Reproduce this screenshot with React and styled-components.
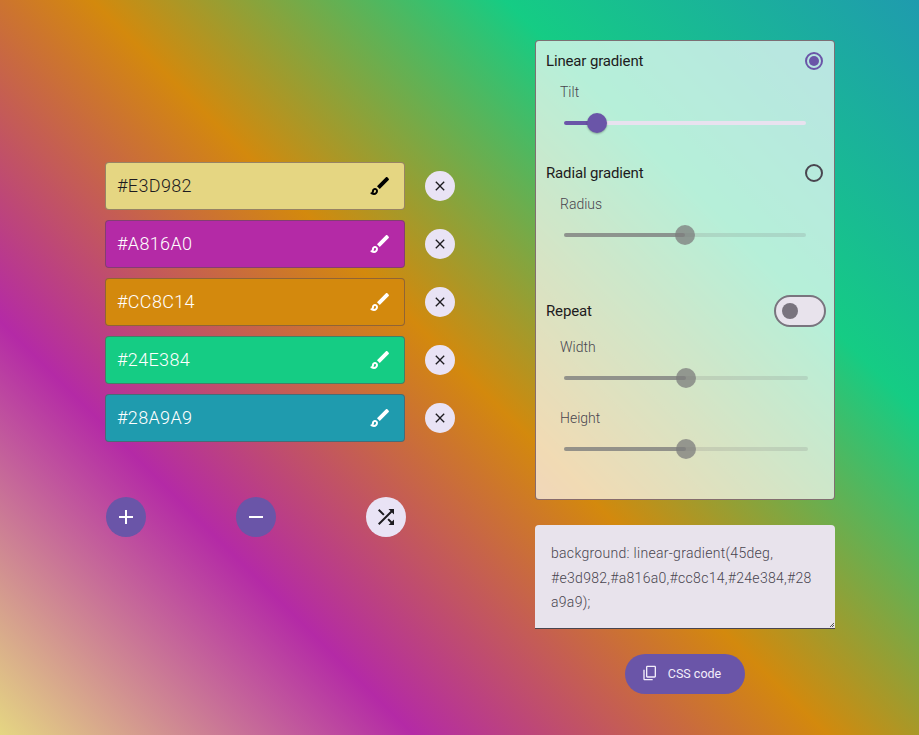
import React from "react";
import styled, { createGlobalStyle } from "styled-components";

const colors = [
  { hex: "#E3D982", swatch: "#e5d682", ink: "#1d1b20", icon: "#000" },
  { hex: "#A816A0", swatch: "#b42aa6", ink: "#fff", icon: "#fff" },
  { hex: "#CC8C14", swatch: "#d3890d", ink: "#fff", icon: "#fff" },
  { hex: "#24E384", swatch: "#15cc84", ink: "#fff", icon: "#fff" },
  { hex: "#28A9A9", swatch: "#1f9bae", ink: "#fff", icon: "#fff" },
];

const cssText =
  "background: linear-gradient(45deg, #e3d982,#a816a0,#cc8c14,#24e384,#28a9a9);";

const Global = createGlobalStyle`
  html, body { margin: 0; padding: 0; height: 100%; }
  body {
    font-family: Roboto, "Liberation Sans", sans-serif;
    overflow: hidden;
  }
`;

const Page = styled.main`
  width: 919px;
  height: 735px;
  display: flex;
  align-items: flex-start;
  gap: 80px;
  padding: 40px 0 0 105px;
  box-sizing: border-box;
  background: linear-gradient(45deg, #e5d682, #b42aa6, #d3890d, #15cc84, #1f9bae);
`;

const LeftColumn = styled.section`
  width: 350px;
  padding-top: 122px;
`;

const ColorList = styled.div`
  display: flex;
  flex-direction: column;
  gap: 10px;
`;

const ColorRow = styled.div`
  display: flex;
  align-items: center;
  gap: 20px;
`;

const ColorField = styled.div`
  width: 300px;
  height: 48px;
  box-sizing: border-box;
  display: flex;
  align-items: center;
  padding: 0 12px 0 11px;
  border: 1px solid rgba(100, 75, 80, 0.6);
  border-radius: 4px;
  background: ${(p) => p.$bg};
`;

const ColorInput = styled.input`
  flex: 1;
  min-width: 0;
  border: 0;
  padding: 0 0 2px;
  outline: none;
  background: transparent;
  font-family: Roboto, sans-serif;
  font-weight: 300;
  font-size: 18px;
  letter-spacing: 0.35px;
  color: ${(p) => p.$ink};
`;

const RoundButton = styled.button`
  width: ${(p) => p.$size}px;
  height: ${(p) => p.$size}px;
  flex: none;
  padding: 0;
  border: 0;
  border-radius: 50%;
  display: flex;
  align-items: center;
  justify-content: center;
  background: ${(p) => (p.$primary ? "#6a55a8" : "#e9e3f5")};
  color: ${(p) => (p.$primary ? "#fff" : "#1d1b20")};
`;

const Actions = styled.div`
  width: 300px;
  margin: 55px 0 0 1px;
  display: flex;
  justify-content: space-between;
`;

const RightColumn = styled.section`
  width: 300px;
  display: flex;
  flex-direction: column;
  align-items: center;
`;

const Panel = styled.div`
  width: 100%;
  height: 460px;
  box-sizing: border-box;
  border: 1px solid rgba(110, 80, 90, 0.8);
  border-radius: 4px;
  background: rgba(255, 255, 255, 0.69);
`;

const OptionRow = styled.div`
  height: ${(p) => p.$h || 40}px;
  margin-top: ${(p) => p.$mt || 0}px;
  padding: 0 ${(p) => p.$pr || 11}px 0 10px;
  display: flex;
  align-items: center;
  justify-content: space-between;
`;

const OptionTitle = styled.span`
  font-size: 15px;
  font-weight: 400;
  letter-spacing: -0.15px;
  color: #1d1b20;
`;

const Radio = styled.span`
  width: 18px;
  height: 18px;
  box-sizing: border-box;
  border-radius: 50%;
  border: 2px solid ${(p) => (p.$on ? "#6a55a8" : "#49454f")};
  display: flex;
  align-items: center;
  justify-content: center;
  &::after {
    content: "";
    width: 10px;
    height: 10px;
    border-radius: 50%;
    background: ${(p) => (p.$on ? "#6a55a8" : "transparent")};
  }
`;

const FieldLabel = styled.div`
  height: 22px;
  line-height: 22px;
  margin-top: ${(p) => p.$mt || 0}px;
  padding-left: 24px;
  font-size: 14px;
  font-weight: 300;
  color: #49454f;
`;

const SliderBox = styled.div`
  height: 40px;
  display: flex;
  align-items: center;
  padding-left: 28px;
`;

const Track = styled.div`
  position: relative;
  width: ${(p) => p.$w}px;
  height: 4px;
  border-radius: 2px;
  background: ${(p) => (p.$off ? "rgba(124,124,124,0.2)" : "#e8e2ef")};
`;

const Fill = styled.div`
  height: 100%;
  border-radius: 2px;
  background: ${(p) => (p.$off ? "rgba(124,124,124,0.72)" : "#6a55a8")};
`;

const Thumb = styled.div`
  position: absolute;
  top: -8px;
  width: 20px;
  height: 20px;
  margin-left: -10px;
  border-radius: 50%;
  background: ${(p) => (p.$off ? "rgba(124,124,124,0.75)" : "#6a55a8")};
  box-shadow: ${(p) => (p.$off ? "none" : "0 1px 2px rgba(0,0,0,0.3)")};
`;

const Toggle = styled.span`
  width: 52px;
  height: 32px;
  box-sizing: border-box;
  border: 2px solid #79747e;
  border-radius: 16px;
  background: #e8e3ec;
  display: flex;
  align-items: center;
  padding-left: 6px;
  &::after {
    content: "";
    width: 16px;
    height: 16px;
    border-radius: 50%;
    background: #79747e;
  }
`;

const CodeArea = styled.textarea`
  width: 300px;
  height: 104px;
  margin-top: 25px;
  display: block;
  box-sizing: border-box;
  padding: 16px;
  border: 0;
  border-bottom: 1px solid #49454f;
  border-radius: 4px 4px 0 0;
  outline: none;
  background: #e8e3ec;
  font-family: Roboto, sans-serif;
  font-weight: 300;
  font-size: 14px;
  line-height: 24.5px;
  letter-spacing: 0.3px;
  color: #49454f;
  &::-webkit-resizer {
    background:
      linear-gradient(135deg, transparent 0 55%, #555 55% 68%, transparent 68% 78%, #555 78% 90%, transparent 90%)
      no-repeat bottom 1px right 1px / 5px 5px;
  }
`;

const CopyButton = styled.button`
  width: 120px;
  height: 40px;
  margin-top: 25px;
  padding: 0 7px 2px 0;
  border: 0;
  border-radius: 20px;
  display: flex;
  align-items: center;
  justify-content: center;
  gap: 10px;
  background: #6a55a8;
  color: #f3eefb;
  font-family: Roboto, sans-serif;
  font-size: 12.5px;
  font-weight: 400;
`;

const Icon = ({ d, size = 24, color = "currentColor" }) => (
  <svg width={size} height={size} viewBox="0 0 24 24" fill={color} aria-hidden="true">
    <path d={d} />
  </svg>
);

const paths = {
  brush:
    "M7 16c.55 0 1 .45 1 1 0 1.1-.9 2-2 2-.17 0-.33-.02-.5-.05.31-.55.5-1.21.5-1.95 0-.55.45-1 1-1M18.67 3c-.26 0-.51.1-.71.29L9 12.25 11.75 15l8.96-8.96c.39-.39.39-1.02 0-1.41l-1.34-1.34c-.2-.2-.45-.29-.7-.29zM7 14c-1.66 0-3 1.34-3 3 0 1.31-1.16 2-2 2 .92 1.22 2.49 2 4 2 2.21 0 4-1.79 4-4 0-1.66-1.34-3-3-3z",
  close:
    "M19 6.41L17.59 5 12 10.59 6.41 5 5 6.41 10.59 12 5 17.59 6.41 19 12 13.41 17.59 19 19 17.59 13.41 12z",
  add: "M19 13h-6v6h-2v-6H5v-2h6V5h2v6h6v2z",
  remove: "M19 13H5v-2h14v2z",
  shuffle:
    "M10.59 9.17L5.41 4 4 5.41l5.17 5.17 1.42-1.41zM14.5 4l2.04 2.04L4 18.59 5.41 20 17.96 7.46 20 9.5V4h-5.5zm.33 9.41l-1.41 1.41 3.13 3.13L14.5 20H20v-5.5l-2.04 2.04-3.13-3.13z",
  copy:
    "M4 7H2v14c0 1.1.9 2 2 2h12v-2H4V7zm4-6c-1.1 0-2 .9-2 2v14c0 1.1.9 2 2 2h11c1.1 0 2-.9 2-2V3c0-1.1-.9-2-2-2H8zm11 16H8V3h11v14z",
};

const Slider = ({ width, value, off }) => (
  <SliderBox>
    <Track $w={width} $off={off}>
      <Fill $off={off} style={{ width: value }} />
      <Thumb $off={off} style={{ left: value }} />
    </Track>
  </SliderBox>
);

export default function App() {
  return (
    <>
      <Global />
      <Page>
        <LeftColumn>
          <ColorList>
            {colors.map((c) => (
              <ColorRow key={c.hex}>
                <ColorField $bg={c.swatch}>
                  <ColorInput $ink={c.ink} defaultValue={c.hex} />
                  <Icon d={paths.brush} color={c.icon} />
                </ColorField>
                <RoundButton $size={30}>
                  <Icon d={paths.close} size={16} />
                </RoundButton>
              </ColorRow>
            ))}
          </ColorList>
          <Actions>
            <RoundButton $size={40} $primary>
              <Icon d={paths.add} />
            </RoundButton>
            <RoundButton $size={40} $primary>
              <Icon d={paths.remove} />
            </RoundButton>
            <RoundButton $size={40}>
              <Icon d={paths.shuffle} />
            </RoundButton>
          </Actions>
        </LeftColumn>
        <RightColumn>
          <Panel>
            <OptionRow>
              <OptionTitle>Linear gradient</OptionTitle>
              <Radio $on />
            </OptionRow>
            <FieldLabel>Tilt</FieldLabel>
            <Slider width={242} value={33} />
            <OptionRow $mt={10}>
              <OptionTitle>Radial gradient</OptionTitle>
              <Radio />
            </OptionRow>
            <FieldLabel>Radius</FieldLabel>
            <Slider width={242} value={121} off />
            <OptionRow $mt={40} $h={32} $pr={8}>
              <OptionTitle>Repeat</OptionTitle>
              <Toggle />
            </OptionRow>
            <FieldLabel $mt={9}>Width</FieldLabel>
            <Slider width={244} value={122} off />
            <FieldLabel $mt={9}>Height</FieldLabel>
            <Slider width={244} value={122} off />
          </Panel>
          <CodeArea rows={3} defaultValue={cssText} spellCheck={false} />
          <CopyButton>
            <Icon d={paths.copy} size={16} />
            CSS code
          </CopyButton>
        </RightColumn>
      </Page>
    </>
  );
}
